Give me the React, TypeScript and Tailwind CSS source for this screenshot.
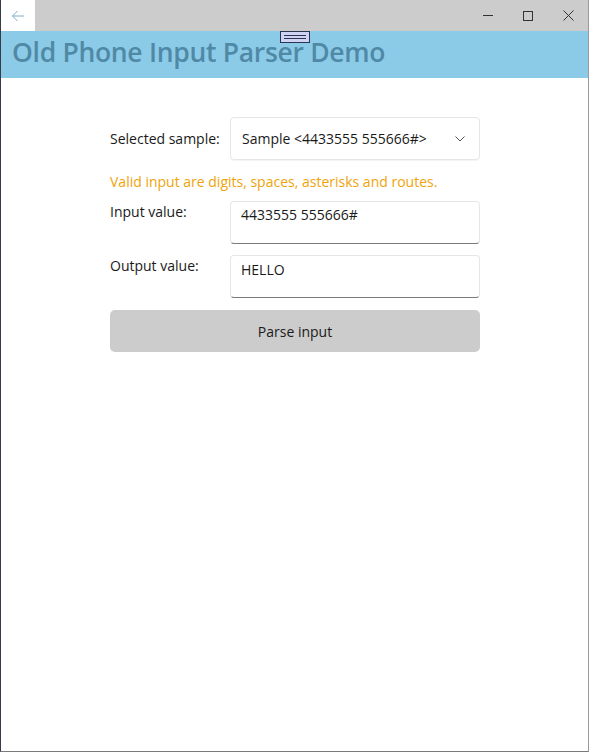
import React from "react";

export default function App() {
  return (
    <div className="w-[589px] h-[752px] bg-white border-l border-l-[#3a3a4a] border-r border-r-[#9a9a9a] border-b border-b-[#7a7a7a] flex flex-col overflow-hidden" style={{ fontFamily: '"Open Sans", "Noto Sans", sans-serif' }}>
      {/* title bar */}
      <div className="h-[31px] bg-[#cccccc] flex items-start">
        <div className="w-[34px] h-[31px] bg-white flex items-center justify-center">
          <svg width="14" height="12" viewBox="0 0 14 12" fill="none" stroke="#7aaecd" strokeWidth="1">
            <path d="M13 6H1.5M6.5 1L1.5 6l5 5" />
          </svg>
        </div>
        <div className="flex-1" />
        <div className="w-[40px] h-[31px] flex items-center justify-center">
          <div className="w-[10px] h-px bg-[#333]" />
        </div>
        <div className="w-[40px] h-[31px] flex items-center justify-center">
          <div className="w-[10px] h-[10px] border border-[#333]" />
        </div>
        <div className="w-[40px] h-[31px] flex items-center justify-center">
          <svg width="11" height="11" viewBox="0 0 11 11" stroke="#333" strokeWidth="1">
            <path d="M0.5 0.5l10 10M10.5 0.5l-10 10" />
          </svg>
        </div>
      </div>
      {/* header */}
      <div className="relative h-[47px] bg-[#8ccbe8] flex items-center pl-[11px] pb-[4px]">
        <span className="text-[26.5px] font-semibold text-[#5089a5] leading-none tracking-[-0.3px]">Old Phone Input Parser Demo</span>
        <div className="absolute left-[279px] top-0 w-[30px] h-[12px] bg-[#d0d4f4] border border-[#2a3550] flex flex-col items-center justify-center gap-[2px]">
          <div className="w-[22px] h-px bg-[#2a3550]" />
          <div className="w-[22px] h-px bg-[#2a3550]" />
        </div>
      </div>
      {/* form */}
      <div className="w-[370px] ml-[109px] mt-[39px] flex flex-col text-[14px] text-[#1a1a1a]">
        <div className="flex items-center">
          <div className="w-[120px]">Selected sample:</div>
          <div className="w-[250px] h-[43px] border border-[#e6e6e6] rounded-[4px] flex items-center justify-between pl-[11px] pr-[14px] shadow-[0_1px_1px_rgba(0,0,0,0.05)]">
            <span>Sample &lt;4433555 555666#&gt;</span>
            <svg width="10" height="6" viewBox="0 0 10 6" fill="none" stroke="#555" strokeWidth="1">
              <path d="M0.5 0.5L5 5l4.5-4.5" />
            </svg>
          </div>
        </div>
        <div className="mt-[11px] text-[#f0a30a]">Valid input are digits, spaces, asterisks and routes.</div>
        <div className="flex items-start mt-[9px]">
          <div className="w-[120px]">Input value:</div>
          <div className="w-[250px] h-[43px] border border-[#e6e6e6] border-b-[#7a7a7a] rounded-[4px] pl-[10px] pt-[2px]">4433555 555666#</div>
        </div>
        <div className="flex items-start mt-[11px]">
          <div className="w-[120px]">Output value:</div>
          <div className="w-[250px] h-[43px] border border-[#e6e6e6] border-b-[#7a7a7a] rounded-[4px] pl-[10px] pt-[3px]">HELLO</div>
        </div>
        <div className="mt-[12px] h-[42px] bg-[#cccccc] rounded-[5px] flex items-center justify-center">Parse input</div>
      </div>
    </div>
  );
}
